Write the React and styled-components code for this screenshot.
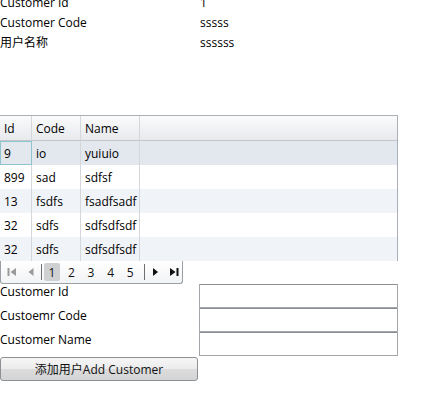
import React from 'react';
import styled, { createGlobalStyle } from 'styled-components';

const GlobalStyle = createGlobalStyle`
  html, body { margin: 0; padding: 0; background: #ffffff; }
  body {
    font-family: "Open Sans", "Noto Sans CJK SC", sans-serif;
    font-size: 12px;
    color: #000;
    overflow: hidden;
  }
`;

const Page = styled.div`
  width: 421px;
  height: 393px;
  overflow: hidden;
`;

const Content = styled.div`
  margin-top: -8px;
  width: 398px;
`;

const InfoTable = styled.div`
  display: grid;
  grid-template-columns: 200px 1fr;
  grid-auto-rows: 20px;
  align-items: center;
`;

const Spacer = styled.div`
  height: ${(p) => p.h}px;
`;

const Grid = styled.div`
  border-top: 1px solid #a9b0b8;
  border-right: 1px solid #a9b0b8;
  display: grid;
  grid-template-columns: 32px 49px 59px 1fr;
`;

const HeaderCell = styled.div`
  height: 24px;
  display: flex;
  align-items: center;
  padding-left: 4px;
  background: linear-gradient(#fbfbfc, #e7e9ec);
  border-right: ${(p) => (p.last ? 'none' : '1px solid #d4d7db')};
  border-bottom: 1px solid #c3c7cc;
`;

const Cell = styled.div`
  height: 24px;
  box-sizing: border-box;
  display: flex;
  align-items: center;
  padding-left: 4px;
  background: ${(p) => (p.sel ? '#e3e7ee' : p.alt ? '#f0f3f8' : '#ffffff')};
  border-right: ${(p) => (p.last ? 'none' : '1px solid #d4d7db')};
  ${(p) => p.focus && 'border: 1px solid #8fc4cc; padding-left: 3px;'}
`;

const Pager = styled.div`
  width: 183px;
  height: 23px;
  display: flex;
  align-items: center;
  border: 1px solid #9aa0a6;
  border-top: none;
  border-radius: 0 0 3px 3px;
  background: linear-gradient(#ffffff, #f2f3f5);
  box-sizing: border-box;
  padding-left: 3px;
`;

const NavBtn = styled.div`
  width: 16px;
  height: 18px;
  display: flex;
  align-items: center;
  justify-content: center;
  margin-right: ${(p) => p.mr || 0}px;
`;

const Sep = styled.div`
  width: 1px;
  height: 16px;
  background: #6f6f6f;
  margin: 0 2px;
`;

const PageNum = styled.div`
  width: 16px;
  height: 18px;
  margin-right: 4px;
  display: flex;
  align-items: center;
  justify-content: center;
  font-size: 12px;
  color: #111;
  background: ${(p) => (p.active ? '#cfd0d2' : 'transparent')};
  border-radius: 2px;
`;

const Form = styled.div`
  display: grid;
  grid-template-columns: 199px 199px;
  grid-auto-rows: 24px;
`;

const Label = styled.div`
  line-height: 16px;
`;

const Input = styled.div`
  box-sizing: border-box;
  height: 24px;
  border: 1px solid #a3a7ab;
  border-top-color: #8a8d91;
  border-radius: 1px;
  background: #ffffff;
`;

const Button = styled.button`
  width: 198px;
  height: 24px;
  margin-top: 1px;
  font-family: "Open Sans", "Noto Sans CJK SC", sans-serif;
  font-size: 12px;
  color: #111;
  border: 1px solid #8d9196;
  border-radius: 3px;
  background: linear-gradient(#f6f6f6 0%, #ebebeb 50%, #dcdcdc 51%, #d3d4d6 100%);
  padding: 0;
`;

const Icon = ({ type }) => {
  const dim = type === 'first' || type === 'prev';
  const c = dim ? '#9a9a9a' : '#111';
  return (
    <svg width="12" height="12" viewBox="0 0 12 12">
      {type === 'first' && (
        <>
          <rect x="1.5" y="2" width="2" height="8" fill={c} />
          <path d="M10 2 L4.5 6 L10 10 Z" fill={c} />
        </>
      )}
      {type === 'prev' && <path d="M8.5 2 L3.5 6 L8.5 10 Z" fill={c} />}
      {type === 'next' && <path d="M4 2 L9 6 L4 10 Z" fill={c} />}
      {type === 'last' && (
        <>
          <path d="M2 2 L7.5 6 L2 10 Z" fill={c} />
          <rect x="8.5" y="2" width="2" height="8" fill={c} />
        </>
      )}
    </svg>
  );
};

const rows = [
  ['9', 'io', 'yuiuio'],
  ['899', 'sad', 'sdfsf'],
  ['13', 'fsdfs', 'fsadfsadf'],
  ['32', 'sdfs', 'sdfsdfsdf'],
  ['32', 'sdfs', 'sdfsdfsdf'],
];

export default function App() {
  return (
    <Page>
      <GlobalStyle />
      <Content>
        <InfoTable>
          <div>Customer Id</div>
          <div>1</div>
          <div>Customer Code</div>
          <div>sssss</div>
          <div>用户名称</div>
          <div>ssssss</div>
        </InfoTable>
        <Spacer h={63} />
        <Grid>
          <HeaderCell>Id</HeaderCell>
          <HeaderCell>Code</HeaderCell>
          <HeaderCell>Name</HeaderCell>
          <HeaderCell last />
          {rows.map((r, i) => (
            <React.Fragment key={i}>
              <Cell sel={i === 0} alt={i % 2 === 0} focus={i === 0}>{r[0]}</Cell>
              <Cell sel={i === 0} alt={i % 2 === 0}>{r[1]}</Cell>
              <Cell sel={i === 0} alt={i % 2 === 0}>{r[2]}</Cell>
              <Cell sel={i === 0} alt={i % 2 === 0} last />
            </React.Fragment>
          ))}
        </Grid>
        <Pager>
          <NavBtn mr={4}><Icon type="first" /></NavBtn>
          <NavBtn><Icon type="prev" /></NavBtn>
          <Sep />
          {[1, 2, 3, 4, 5].map((n) => (
            <PageNum key={n} active={n === 1}>{n}</PageNum>
          ))}
          <Sep />
          <NavBtn mr={4}><Icon type="next" /></NavBtn>
          <NavBtn><Icon type="last" /></NavBtn>
        </Pager>
        <Form>
          <Label>Customer Id</Label>
          <Input />
          <Label>Custoemr Code</Label>
          <Input />
          <Label>Customer Name</Label>
          <Input />
        </Form>
        <Button>添加用户Add Customer</Button>
      </Content>
    </Page>
  );
}
